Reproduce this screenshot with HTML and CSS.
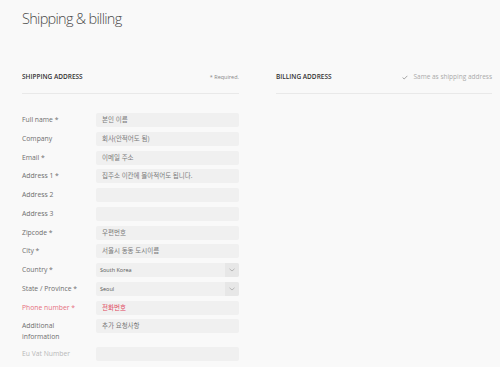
FILE: index.html
```html
<!DOCTYPE html>
<html>
<head>
<meta charset="utf-8">
<link rel="stylesheet" href="styles.css">
<title>Shipping &amp; billing</title>
</head>
<body>
<div class="page">
<h1 class="title">Shipping &amp; billing</h1>

<div class="columns">
  <div class="col">
    <div class="section-head">
      <span class="section-name">Shipping address</span>
      <span class="note">* Required.</span>
    </div>

    <div class="form">
      <label class="lbl">Full name *</label>
      <div class="field">본인 이름</div>

      <label class="lbl">Company</label>
      <div class="field">회사(안적어도 됨)</div>

      <label class="lbl">Email *</label>
      <div class="field">이메일 주소</div>

      <label class="lbl">Address 1 *</label>
      <div class="field">집주소 이칸에 몰아적어도 됩니다.</div>

      <label class="lbl">Address 2</label>
      <div class="field"></div>

      <label class="lbl">Address 3</label>
      <div class="field"></div>

      <label class="lbl">Zipcode *</label>
      <div class="field">우편번호</div>

      <label class="lbl">City *</label>
      <div class="field">서울시 동동 도시이름</div>

      <label class="lbl">Country *</label>
      <div class="field select"><span class="val">South Korea</span><span class="arrow"><svg width="6" height="4" viewBox="0 0 6 4"><path d="M0.5 0.8 L3 3 L5.5 0.8" fill="none" stroke="#a8a8a8" stroke-width="0.8"/></svg></span></div>

      <label class="lbl">State / Province *</label>
      <div class="field select"><span class="val">Seoul</span><span class="arrow"><svg width="6" height="4" viewBox="0 0 6 4"><path d="M0.5 0.8 L3 3 L5.5 0.8" fill="none" stroke="#a8a8a8" stroke-width="0.8"/></svg></span></div>

      <label class="lbl error">Phone number *</label>
      <div class="field error">전화번호</div>

      <label class="lbl tall">Additional<br>information</label>
      <div class="field">추가 요청사항</div>

      <label class="lbl muted">Eu Vat Number</label>
      <div class="field"></div>
    </div>
  </div>

  <div class="col">
    <div class="section-head">
      <span class="section-name">Billing address</span>
      <span class="same"><svg width="6" height="5" viewBox="0 0 6 5"><path d="M0.6 2.6 L2.2 4 L5.4 0.8" fill="none" stroke="#9a9a9a" stroke-width="0.9"/></svg>Same as shipping address</span>
    </div>
  </div>
</div>
</div>
</body>
</html>
```

FILE: styles.css
```css
body {
    margin: 0;
    background: #f9f9f9;
    font-family: "Open Sans", "Noto Sans CJK KR", sans-serif;
    color: #555;
}

.page {
    padding: 6px 8px 0 22px;
}

.title {
    margin: 0;
    font-size: 14.5px;
    font-weight: 300;
    letter-spacing: -0.7px;
    line-height: 26px;
    color: #4a4a4a;
}

.columns {
    display: grid;
    grid-template-columns: 217px 216px;
    column-gap: 37px;
    margin-top: 38px;
}

.section-head {
    display: flex;
    justify-content: space-between;
    align-items: flex-start;
    height: 23px;
    line-height: 14px;
    border-bottom: 1px solid #e9e9e9;
}

.section-name {
    font-size: 6.5px;
    font-weight: 600;
    text-transform: uppercase;
    color: #333;
}

.note {
    font-size: 5.5px;
    color: #888;
}

.same {
    display: flex;
    align-items: center;
    gap: 5px;
    font-size: 6.5px;
    color: #aaa;
}

.form {
    display: grid;
    grid-template-columns: 74px 143px;
    row-gap: 4.75px;
    margin-top: 19px;
    align-items: center;
}

.lbl {
    font-size: 6.8px;
    font-weight: 400;
    color: #6e6e6e;
    line-height: 10px;
}

.lbl.tall {
    line-height: 11px;
    padding-top: 1px;
}

.lbl.error {
    color: #e6707f;
}

.lbl.muted {
    color: #b8b8b8;
}

.field {
    height: 14px;
    line-height: 14px;
    background: #f0f0f0;
    border-radius: 2px;
    padding-left: 6px;
    font-size: 6.5px;
    color: #7a7a7a;
    box-sizing: border-box;
}

.form .tall + .field {
    align-self: start;
}

.field.error {
    color: #e0475e;
}

.field.select {
    display: flex;
    justify-content: space-between;
    padding-left: 4px;
    font-size: 5.5px;
    color: #555;
}

.arrow {
    width: 14px;
    display: flex;
    align-items: center;
    justify-content: center;
    background: #e7e7e7;
    border-radius: 0 2px 2px 0;
}
```
